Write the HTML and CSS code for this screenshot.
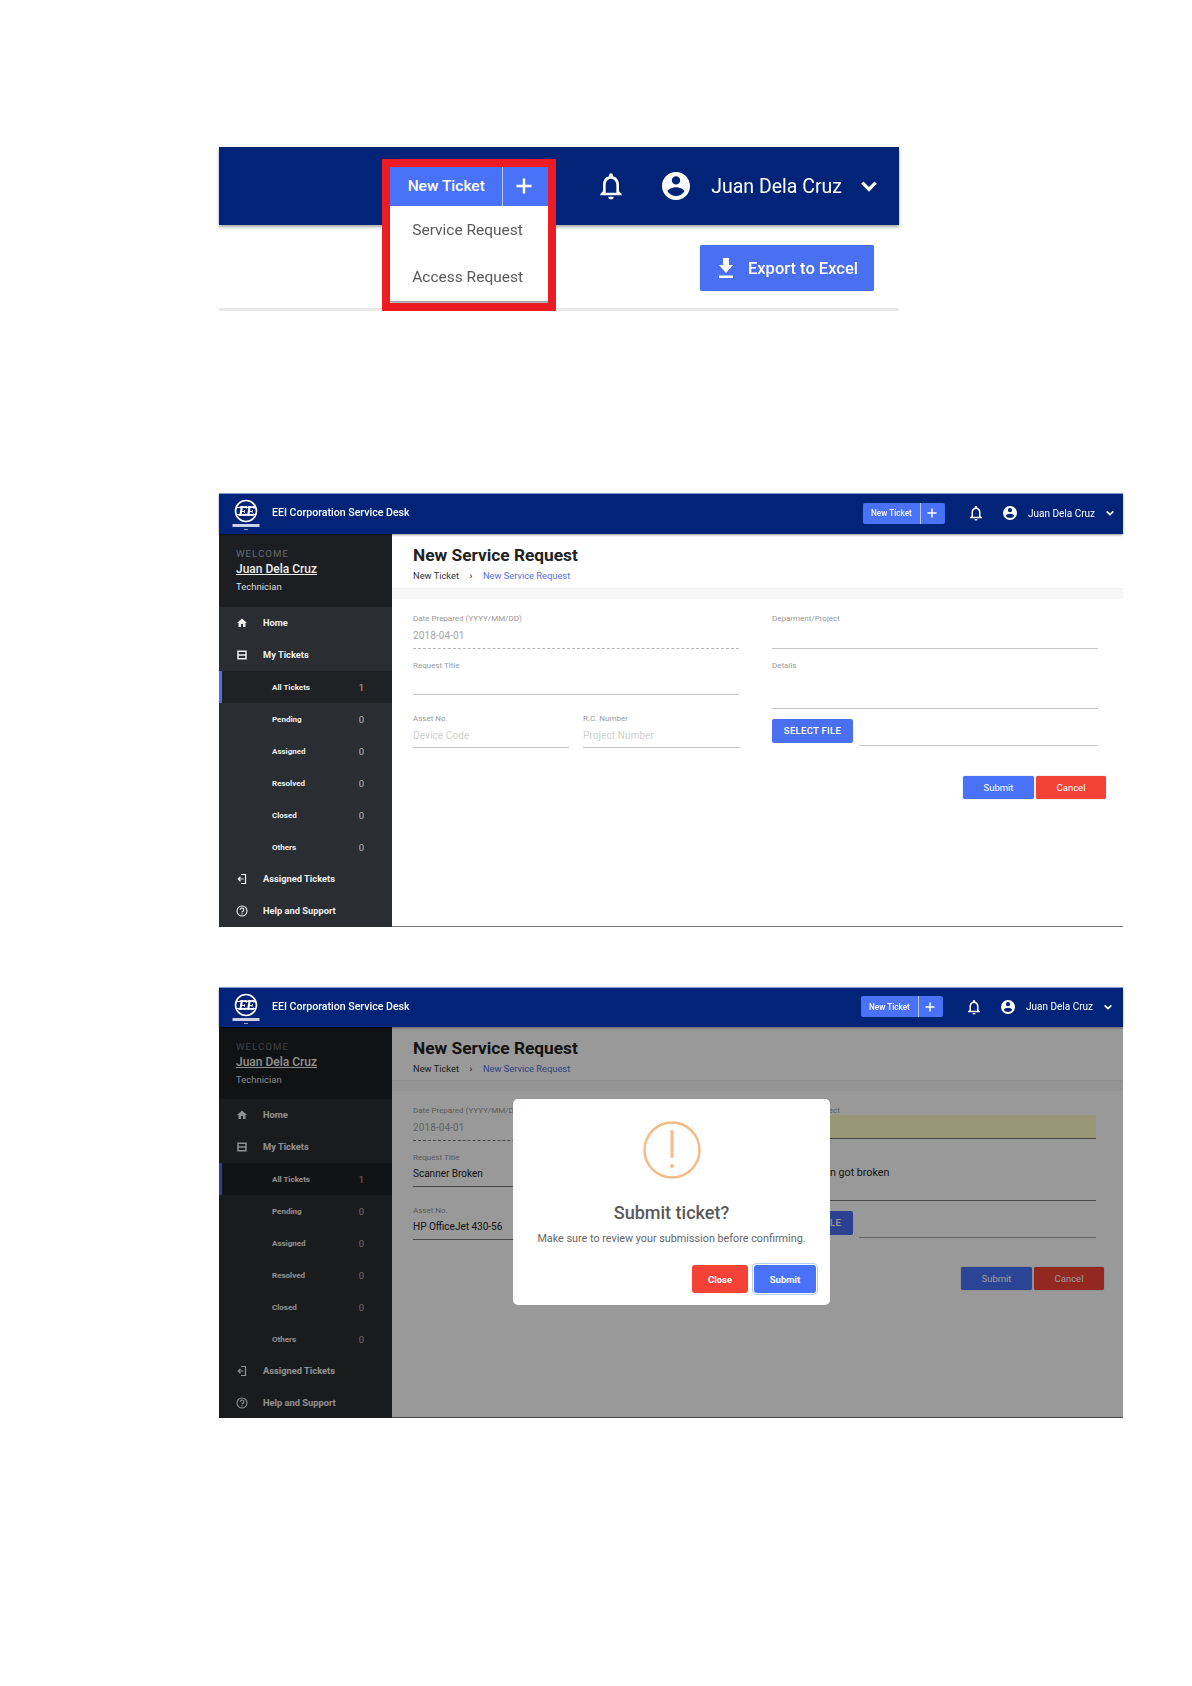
FILE: index.html
```html
<!DOCTYPE html>
<html lang="en">
<head>
<meta charset="utf-8">
<title>EEI Corporation Service Desk</title>
<link rel="stylesheet" href="styles.css">
</head>
<body>
<svg class="sprite" aria-hidden="true">
  <symbol id="i-bell" viewBox="0 0 24 24"><path d="M16,17H8V11C8,8.5 10,6.5 12,6.5C14,6.5 16,8.5 16,11M18,16V11C18,7.93 16.36,5.36 13.5,4.68V4A1.5,1.5 0 0,0 12,2.5A1.5,1.5 0 0,0 10.5,4V4.68C7.63,5.36 6,7.92 6,11V16L4,18V19H20V18M12,22A2,2 0 0,0 14,20H10A2,2 0 0,0 12,22Z"/></symbol>
  <symbol id="i-user" viewBox="2 2 20 20"><path d="M12,19.2C9.5,19.2 7.29,17.92 6,16C6.03,14 10,12.9 12,12.9C14,12.9 17.97,14 18,16C16.71,17.92 14.5,19.2 12,19.2M12,5A3,3 0 0,1 15,8A3,3 0 0,1 12,11A3,3 0 0,1 9,8A3,3 0 0,1 12,5M12,2A10,10 0 0,0 2,12A10,10 0 0,0 12,22A10,10 0 0,0 22,12C22,6.47 17.5,2 12,2Z"/></symbol>
  <symbol id="i-chev" viewBox="0 0 24 24"><path d="M4 8l8 8 8-8" fill="none" stroke="currentColor" stroke-width="4"/></symbol>
  <symbol id="i-plus" viewBox="0 0 24 24"><path d="M12 3v18M3 12h18" fill="none" stroke="currentColor" stroke-width="3"/></symbol>
  <symbol id="i-down" viewBox="0 0 24 24"><path d="M5,22H19V19.5H5M19,9H15V2H9V9H5L12,17L19,9Z"/></symbol>
  <symbol id="i-home" viewBox="0 0 24 24"><path d="M10,20V14H14V20H19V12H22L12,3L2,12H5V20H10Z"/></symbol>
  <symbol id="i-tickets" viewBox="0 0 24 24"><path d="M4 4.500h16v15H4z" fill="none" stroke="currentColor" stroke-width="3"/><path d="M4 10.500h16v3H4z"/></symbol>
  <symbol id="i-assign" viewBox="0 0 24 24"><path d="M10 3h9v18h-9" fill="none" stroke="currentColor" stroke-width="2.400"/><path d="M15 12H5M9 7.500L4.500 12 9 16.500" fill="none" stroke="currentColor" stroke-width="2.400"/></symbol>
  <symbol id="i-help" viewBox="0 0 24 24"><circle cx="12" cy="12" r="10" fill="none" stroke="currentColor" stroke-width="2.200"/><path d="M8.500 9.500a3.500 3.500 0 1 1 5.500 3c-1.300.9-2 1.500-2 2.500" fill="none" stroke="currentColor" stroke-width="2.200"/><circle cx="12" cy="18" r="1.300"/></symbol>
  <symbol id="i-logo" viewBox="0 0 30 36">
    <circle cx="15" cy="13" r="10.500" fill="none" stroke="currentColor" stroke-width="1.600"/>
    <path d="M5 9.500h20M5 16.500h20" fill="none" stroke="currentColor" stroke-width="1"/>
    <text x="15" y="18" class="logo-mark">EE</text>
    <rect x="1.500" y="26" width="27" height="3" fill="#c9d2e6"/>
    <rect x="13" y="31" width="4" height="1" fill="#8fa0c8"/>
  </symbol>
</svg>

<main class="page">

  <section class="shot">
    <header class="shot-bar">
      <div class="callout">
        <div class="split-btn split-btn-lg">
          <span class="split-label">New Ticket</span>
          <span class="split-add"><svg class="ico-plus-lg"><use href="#i-plus"/></svg></span>
        </div>
        <ul class="drop">
          <li>Service Request</li>
          <li>Access Request</li>
        </ul>
      </div>
      <svg class="ico-bell-lg"><use href="#i-bell"/></svg>
      <svg class="ico-user-lg"><use href="#i-user"/></svg>
      <span class="user-lg">Juan Dela Cruz</span>
      <svg class="ico-chev-lg"><use href="#i-chev"/></svg>
    </header>
    <div class="shot-under">
      <button class="export" type="button"><svg class="ico-down"><use href="#i-down"/></svg>Export to Excel</button>
    </div>
  </section>

  <section class="app app-form">
    <header class="topbar">
      <svg class="logo"><use href="#i-logo"/></svg>
      <span class="brand">EEI Corporation Service Desk</span>
      <div class="split-btn">
        <span class="split-label">New Ticket</span>
        <span class="split-add"><svg class="ico-plus"><use href="#i-plus"/></svg></span>
      </div>
      <svg class="ico-bell"><use href="#i-bell"/></svg>
      <svg class="ico-user"><use href="#i-user"/></svg>
      <span class="user">Juan Dela Cruz</span>
      <svg class="ico-chev"><use href="#i-chev"/></svg>
    </header>
    <div class="app-body">
      <aside class="sidebar">
        <div class="welcome">
          <div class="welcome-k">WELCOME</div>
          <div class="welcome-name">Juan Dela Cruz</div>
          <div class="welcome-role">Technician</div>
        </div>
        <nav>
          <a class="nav"><svg class="nav-ico"><use href="#i-home"/></svg>Home</a>
          <a class="nav"><svg class="nav-ico"><use href="#i-tickets"/></svg>My Tickets</a>
          <a class="sub active"><span>All Tickets</span><b>1</b></a>
          <a class="sub"><span>Pending</span><b>0</b></a>
          <a class="sub"><span>Assigned</span><b>0</b></a>
          <a class="sub"><span>Resolved</span><b>0</b></a>
          <a class="sub"><span>Closed</span><b>0</b></a>
          <a class="sub"><span>Others</span><b>0</b></a>
          <a class="nav"><svg class="nav-ico"><use href="#i-assign"/></svg>Assigned Tickets</a>
          <a class="nav"><svg class="nav-ico"><use href="#i-help"/></svg>Help and Support</a>
        </nav>
      </aside>
      <div class="content">
        <div class="page-head">
          <h1>New Service Request</h1>
          <div class="crumbs"><span>New Ticket</span><i>›</i><a>New Service Request</a></div>
        </div>
        <div class="band"></div>
        <form class="form">
          <div class="form-grid">
            <div class="col">
              <div class="field"><label>Date Prepared (YYYY/MM/DD)</label><div class="input dotted muted">2018-04-01</div></div>
              <div class="field"><label>Request Title</label><div class="input"></div></div>
              <div class="pair">
                <div class="field"><label>Asset No.</label><div class="input ph">Device Code</div></div>
                <div class="field"><label>R.C. Number</label><div class="input ph">Project Number</div></div>
              </div>
            </div>
            <div class="col">
              <div class="field"><label>Deparment/Project</label><div class="input"></div></div>
              <div class="field"><label>Details</label><div class="input tall"></div></div>
              <div class="file-row"><button class="file-btn" type="button">SELECT FILE</button><div class="file-name"></div></div>
            </div>
          </div>
          <div class="actions">
            <button class="btn blue" type="button">Submit</button>
            <button class="btn red" type="button">Cancel</button>
          </div>
        </form>
      </div>
    </div>
  </section>

  <section class="app app-modal">
    <header class="topbar">
      <svg class="logo"><use href="#i-logo"/></svg>
      <span class="brand">EEI Corporation Service Desk</span>
      <div class="split-btn">
        <span class="split-label">New Ticket</span>
        <span class="split-add"><svg class="ico-plus"><use href="#i-plus"/></svg></span>
      </div>
      <svg class="ico-bell"><use href="#i-bell"/></svg>
      <svg class="ico-user"><use href="#i-user"/></svg>
      <span class="user">Juan Dela Cruz</span>
      <svg class="ico-chev"><use href="#i-chev"/></svg>
    </header>
    <div class="app-body">
      <aside class="sidebar">
        <div class="welcome">
          <div class="welcome-k">WELCOME</div>
          <div class="welcome-name">Juan Dela Cruz</div>
          <div class="welcome-role">Technician</div>
        </div>
        <nav>
          <a class="nav"><svg class="nav-ico"><use href="#i-home"/></svg>Home</a>
          <a class="nav"><svg class="nav-ico"><use href="#i-tickets"/></svg>My Tickets</a>
          <a class="sub active"><span>All Tickets</span><b>1</b></a>
          <a class="sub"><span>Pending</span><b>0</b></a>
          <a class="sub"><span>Assigned</span><b>0</b></a>
          <a class="sub"><span>Resolved</span><b>0</b></a>
          <a class="sub"><span>Closed</span><b>0</b></a>
          <a class="sub"><span>Others</span><b>0</b></a>
          <a class="nav"><svg class="nav-ico"><use href="#i-assign"/></svg>Assigned Tickets</a>
          <a class="nav"><svg class="nav-ico"><use href="#i-help"/></svg>Help and Support</a>
        </nav>
      </aside>
      <div class="content">
        <div class="page-head">
          <h1>New Service Request</h1>
          <div class="crumbs"><span>New Ticket</span><i>›</i><a>New Service Request</a></div>
        </div>
        <div class="band"></div>
        <form class="form">
          <div class="form-grid">
            <div class="col">
              <div class="field"><label>Date Prepared (YYYY/MM/DD)</label><div class="input dotted muted">2018-04-01</div></div>
              <div class="field"><label>Request Title</label><div class="input filled">Scanner Broken</div></div>
              <div class="pair">
                <div class="field"><label>Asset No.</label><div class="input filled">HP OfficeJet 430-56</div></div>
              </div>
            </div>
            <div class="col">
              <div class="field"><label>Deparment/Project</label><div class="input filled yellow"></div></div>
              <div class="field"><label>Details</label><div class="input filled tall">Scanner, then got broken</div></div>
              <div class="file-row"><button class="file-btn" type="button">SELECT FILE</button><div class="file-name"></div></div>
            </div>
          </div>
          <div class="actions">
            <button class="btn blue" type="button">Submit</button>
            <button class="btn red" type="button">Cancel</button>
          </div>
        </form>
      </div>
      <div class="scrim"></div>
      <div class="modal">
        <svg class="alert" viewBox="0 0 58 58">
          <circle cx="29" cy="29" r="27.500" fill="none" stroke="#f4bb86" stroke-width="2.500"/>
          <path d="M29 10.500v25" stroke="#f4bb86" stroke-width="3" stroke-linecap="round"/>
          <circle cx="29" cy="45" r="2" fill="#f4bb86"/>
        </svg>
        <h2>Submit ticket?</h2>
        <p>Make sure to review your submission before confirming.</p>
        <div class="modal-actions">
          <button class="mbtn close" type="button">Close</button>
          <button class="mbtn confirm" type="button">Submit</button>
        </div>
      </div>
    </div>
  </section>

</main>
</body>
</html>
```
FILE: styles.css
```css
*, *::before, *::after { box-sizing: border-box; }
html, body { margin: 0; padding: 0; background: #fff; }
body { font-family: Roboto, "Liberation Sans", sans-serif; color: #222; }
.sprite { display: none; }
svg { display: block; fill: currentColor; flex: none; }
.logo-mark { font: italic 700 14px "Liberation Serif", serif; text-anchor: middle; fill: currentColor; letter-spacing: -1.500px; }

.page { display: flex; flex-direction: column; align-items: flex-start; min-height: 1686px; padding: 147px 0 0 219px; }

/* figure 1 */
.shot { width: 680px; height: 164px; display: flex; flex-direction: column; border-bottom: 3px solid #e8e8e8; filter: blur(.4px); }
.shot-bar { height: 78px; flex: none; background: #012478; color: #fff; display: flex; align-items: center; justify-content: flex-end; padding-right: 20px; box-shadow: 0 2px 3px rgba(0,0,0,.35); position: relative; z-index: 1; }
.shot-under { flex: 1; display: flex; justify-content: flex-end; align-items: flex-start; padding: 20px 25px 0 0; }
.callout { position: relative; margin-right: 46px; }
.callout::after { content: ""; position: absolute; left: -8px; right: -7px; top: -7px; height: 152px; border: 8px solid #ed1c24; pointer-events: none; }
.drop { position: absolute; left: 0; right: 0; top: 40px; height: 95px; margin: 0; padding: 0; list-style: none; background: #fff; box-shadow: 0 2px 2px #9a9a9a; color: #5a5a5a; font-size: 15.500px; }
.drop li { height: 47px; display: flex; align-items: center; padding-left: 22px; }
.ico-bell-lg { width: 32px; height: 34px; margin-right: 35px; }
.ico-user-lg { width: 28px; height: 28px; margin-right: 21px; }
.user-lg { font-size: 19.500px; margin-right: 17px; white-space: nowrap; }
.ico-chev-lg { width: 20px; height: 20px; }
.ico-plus-lg { width: 20px; height: 20px; }
.export { width: 174px; height: 46px; border: 0; border-radius: 2px; background: #4a6ff0; color: #fff; display: flex; align-items: center; padding: 0 0 0 14px; gap: 10px; font: 500 16.500px Roboto, sans-serif; box-shadow: 0 0 1px rgba(0,0,0,.5); white-space: nowrap; }
.ico-down { width: 24px; height: 24px; }

/* split button */
.split-btn { display: flex; align-items: stretch; width: 82px; height: 21px; background: #4a72f8; border-radius: 2px; color: #fff; font-size: 8.200px; font-weight: 500; }
.split-label { width: 58px; display: flex; align-items: center; justify-content: center; border-right: 1px solid #b8c8f8; }
.split-add { flex: 1; display: flex; align-items: center; justify-content: center; padding-right: 2px; }
.split-btn-lg { width: 159px; height: 40px; font-size: 15.500px; border-radius: 2px 2px 0 0; }
.split-btn-lg .split-label { width: 113px; }
.split-btn-lg .split-add { padding-right: 4px; }

/* app shell */
.app { width: 904px; filter: blur(.35px); }
.app-form { margin-top: 182px; }
.app-modal { margin-top: 60px; }
.topbar { height: 41px; background: #012478; border-top: 1px solid #7f9bd8; color: #fff; display: flex; align-items: center; padding: 0 8px 2px 12px; box-shadow: 0 1px 2px rgba(0,0,0,.4); position: relative; z-index: 3; }
.logo { width: 30px; height: 36px; margin-top: 6px; }
.brand { font-size: 10.600px; font-weight: 500; margin: 0 auto 1px 11px; white-space: nowrap; }
.ico-plus { width: 12px; height: 12px; }
.ico-bell { width: 18px; height: 18px; margin-left: 22px; }
.ico-user { width: 14px; height: 14px; margin-left: 18px; }
.user { font-size: 10px; margin-left: 11px; white-space: nowrap; }
.ico-chev { width: 10px; height: 10px; margin-left: 10px; }

.app-body { display: flex; height: 393px; position: relative; }
.sidebar { width: 173px; flex: none; background: #2a2d31; color: #fff; }
.welcome { height: 73px; background: #1c1e21; padding: 13px 0 0 17px; }
.welcome-k { font-size: 9.700px; line-height: 13px; letter-spacing: 1px; color: #666a70; }
.welcome-name { font-size: 12px; font-weight: 500; line-height: 18px; text-decoration: underline; color: #eee; }
.welcome-role { font-size: 9.500px; line-height: 14px; margin-top: 2px; color: #ddd; }
.nav { height: 32px; display: flex; align-items: center; padding: 0 0 1px 17px; gap: 15px; font-size: 9.300px; font-weight: 700; color: #f0f0f0; white-space: nowrap; }
.nav-ico { width: 12px; height: 12px; }
.sub { height: 32px; display: flex; align-items: center; justify-content: space-between; padding: 0 28px 0 53px; font-size: 8px; font-weight: 700; color: #eee; }
.sub b { font-size: 9.500px; font-weight: 400; color: #bbb; }
.sub.active { background: #1f2124; box-shadow: inset 3px 0 0 #4a6ff0; }

.content { flex: 1; display: flex; flex-direction: column; border-bottom: 1px solid #777; background: #fff; }
.page-head { height: 55px; padding-top: 9px; padding-left: 21px; flex: none; border-bottom: 1px solid #eee; }
.page-head h1 { margin: 0; font-size: 17.300px; line-height: 24px; font-weight: 700; color: #222; }
.crumbs { margin-top: 2px; display: flex; align-items: center; font-size: 9.300px; line-height: 14px; color: #333; }
.crumbs i { font-style: normal; width: 24px; text-align: center; font-weight: 700; }
.crumbs a { color: #5470e0; }
.band { height: 10px; flex: none; background: #f7f7f7; }
.form { padding: 14px 25px 0 21px; }
.form-grid { display: grid; grid-template-columns: 326px 326px; column-gap: 33px; }
.col { display: flex; flex-direction: column; gap: 11px; }
.field label { display: block; font-size: 8px; line-height: 12px; color: #9a9a9a; white-space: nowrap; }
.input { height: 23px; border-bottom: 1px solid #c4c4c4; font-size: 10px; line-height: 22px; letter-spacing: .1px; white-space: nowrap; }
.col > .field:first-child .input { height: 24px; }
.dotted { border-bottom: 1px dashed #b5b5b5; }
.muted { color: #a5a5a5; }
.ph { color: #cfcfcf; }
.tall { height: 37px; }
.pair { display: grid; grid-template-columns: 156px 157px; column-gap: 14px; margin-top: 7px; }
.file-row { display: flex; align-items: flex-start; gap: 6px; margin-top: -1px; }
.file-btn { width: 81px; height: 24px; border: 0; border-radius: 2px; background: #4a6ff0; color: #fff; font: 500 9.500px Roboto, sans-serif; letter-spacing: .3px; padding: 0 0 1px; }
.file-name { flex: 1; height: 27px; border-bottom: 1px solid #c4c4c4; }
.actions { display: flex; justify-content: flex-end; gap: 2px; margin: 28px -7px 0 0; transform: translateX(1px); }
.btn { height: 23px; width: 71px; border: 0; border-radius: 2px; color: #fff; font: 400 9.500px Roboto, sans-serif; padding: 0 0 1px; box-shadow: 0 0 1px rgba(0,0,0,.6); }
.btn.blue { background: #4a72f8; }
.btn.red { background: #f44336; width: 70px; }

/* modal state */
.app-modal .topbar { height: 40px; padding-right: 10px; }
.app-modal .app-body { height: 391px; }
.app-modal .welcome { height: 72px; }
.app-modal .page-head { height: 54px; }
.app-modal .form { padding-right: 27px; }
.app-modal .form-grid { grid-template-columns: 326px 324px; }
.app-modal .actions { margin-top: 27px; }
.app-modal .dotted { border-bottom-color: #555; }
.app-modal .input { border-bottom-color: #777; }
.app-modal .file-name { border-bottom-color: #aaa; }
.filled { color: #222; letter-spacing: 0; line-height: 19px; }
.filled.tall { font-size: 10.700px; line-height: 22px; height: 39px; }
.app-modal .input.yellow { background: #fdfcc4; height: 26px; margin-top: -2px; }
.scrim { position: absolute; inset: 0; background: rgba(0,0,0,.4); z-index: 1; }
.modal { position: absolute; left: 294px; top: 72px; width: 317px; height: 206px; background: #fff; border-radius: 5px; z-index: 2; display: flex; flex-direction: column; align-items: center; padding: 22px 14px 0; }
.alert { width: 58px; height: 58px; }
.modal h2 { margin: 22px 0 0; font-size: 18px; line-height: 24px; font-weight: 500; color: #595959; }
.modal p { margin: 6px 0 0; font-size: 10.800px; line-height: 16px; color: #666; white-space: nowrap; }
.modal-actions { align-self: stretch; display: flex; justify-content: flex-end; gap: 6px; margin-top: 18px; }
.mbtn { height: 28px; border: 0; border-radius: 3px; color: #fff; font: 700 9.500px Roboto, sans-serif; padding: 0; }
.mbtn.close { width: 56px; background: #f44336; }
.mbtn.confirm { width: 62px; background: #4a72f8; box-shadow: 0 0 0 1px #fff, 0 0 0 2px #b5cdf5; }
```
